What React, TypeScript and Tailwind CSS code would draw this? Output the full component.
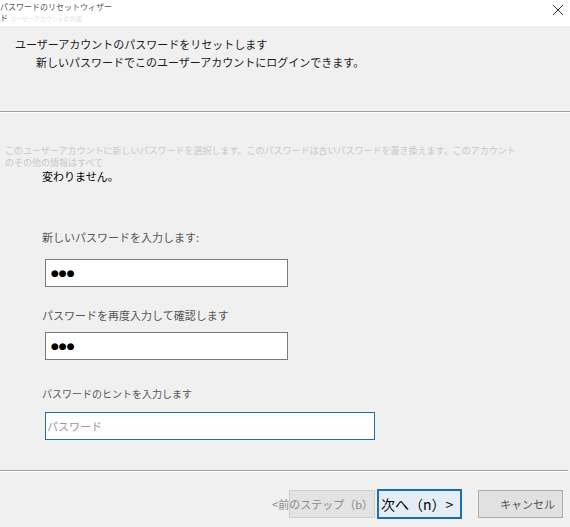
const font = "font-['Noto_Sans_CJK_JP','Noto_Sans',sans-serif]";

const PasswordField = ({ value }: { value: string }) => (
  <div className="ml-[45px] flex h-[28px] w-[243px] items-center border border-[#7a7a7a] bg-white pl-[5px]">
    <span className="font-['DejaVu_Sans',sans-serif] text-[9px] leading-none text-black">
      {value}
    </span>
  </div>
);

const App = () => {
  return (
    <div className={`h-[527px] w-[570px] overflow-hidden bg-[#f0f0f0] ${font}`}>
      {/* title bar */}
      <div className="flex h-[26px] items-start justify-between bg-white">
        <div className="pt-[1px] text-[8px] leading-[11px] text-[#555]">
          <div>パスワードのリセットウィザー</div>
          <div>
            ド<span className="ml-[2px] text-[6px] text-[#e2e2e2]">ユーザーアカウントの管理</span>
          </div>
        </div>
        <svg width="12" height="12" viewBox="0 0 12 12" className="mr-[6px] mt-[4px]">
          <path d="M1 1 L11 11 M11 1 L1 11" stroke="#333" strokeWidth="1" />
        </svg>
      </div>

      {/* header */}
      <div className="h-[85px] pl-[15px] pt-[9px] text-[11px] leading-[18px] text-[#1a1a1a]">
        <div>ユーザーアカウントのパスワードをリセットします</div>
        <div className="pl-[21px]">新しいパスワードでこのユーザーアカウントにログインできます。</div>
      </div>
      <div className="h-[2px] border-t border-[#a0a0a0] bg-white" />

      {/* body */}
      <div className="h-[357px]">
        <div className="pl-[5px] pt-[32px] text-[9px] leading-[12px] text-[#c8c8c8]">
          <div>このユーザーアカウントに新しいパスワードを選択します。このパスワードは古いパスワードを置き換えます。このアカウント</div>
          <div>のその他の情報はすべて</div>
        </div>
        <div className="pl-[42px] text-[11px] leading-[14px] text-black">変わりません。</div>

        <div className="mt-[47px] pl-[42px] text-[11px] leading-[14px] text-[#555]">
          新しいパスワードを入力します:
        </div>
        <div className="mt-[15px]">
          <PasswordField value="●●●" />
        </div>

        <div className="mt-[21px] pl-[42px] text-[11px] leading-[14px] text-[#555]">
          パスワードを再度入力して確認します
        </div>
        <div className="mt-[10px]">
          <PasswordField value="●●●" />
        </div>

        <div className="mt-[27px] pl-[42px] text-[10px] leading-[14px] text-[#555]">
          パスワードのヒントを入力します
        </div>
        <div className="ml-[45px] mt-[11px] flex h-[28px] w-[330px] items-center border border-[#1f6f9f] bg-white pl-[1px] text-[11px] text-[#999]">
          パスワード
        </div>
      </div>

      <div className="mr-[2px] h-[2px] border-t border-[#a0a0a0] bg-white" />

      {/* buttons */}
      <div className="mt-[17px] flex items-center">
        <div className="relative ml-[289px] h-[28px] w-[86px] border border-[#cfcfcf] bg-[#e3e3e3]">
          <span className="absolute right-[1px] top-[6px] whitespace-nowrap text-[11px] leading-[14px] text-[#8a8a8a]">
            &lt;前のステップ（b）
          </span>
        </div>
        <div className="ml-[2px] flex h-[30px] w-[85px] items-center border-2 border-[#1a6eb5] bg-[#e5eef6] pl-[2px] text-[14px] leading-none whitespace-nowrap text-black">
          次へ（n）&gt;
        </div>
        <div className="ml-[16px] flex h-[28px] w-[85px] items-center justify-end border border-[#adadad] bg-[#e1e1e1] pr-[7px] text-[11px] text-[#555]">
          キャンセル
        </div>
      </div>
    </div>
  );
};

export default App;
